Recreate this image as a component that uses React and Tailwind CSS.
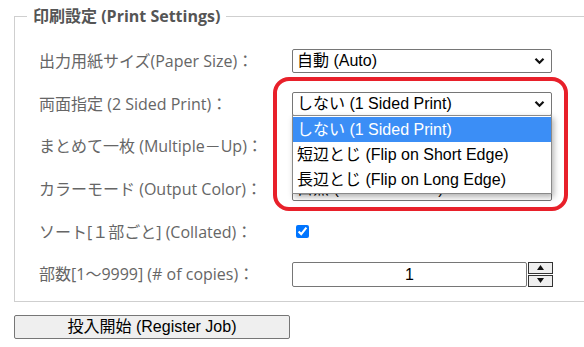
import React from 'react';

const labelFont = { fontFamily: '"Open Sans", "Noto Sans CJK JP", sans-serif' };
const ctrlFont = { fontFamily: '"Liberation Sans", "Noto Sans CJK JP", sans-serif' };

const Chevron = () => (
  <svg className="absolute right-[6px] top-1/2 -translate-y-1/2" width="11" height="8" viewBox="0 0 11 8">
    <path d="M1.5 1.8 L5.5 5.8 L9.5 1.8" fill="none" stroke="#111" strokeWidth="2.2" />
  </svg>
);

const FakeSelect = ({ value }) => (
  <div
    className="relative h-[24px] w-[260px] rounded-[2px] border border-[#767676] bg-white pl-[4px] text-[16px] leading-[22px] text-black"
    style={ctrlFont}
  >
    {value}
    <Chevron />
  </div>
);

const Row = ({ label, children }) => (
  <div className="flex h-[42.6px] items-center">
    <div className="w-[253px] text-[16px] text-[#666]" style={labelFont}>{label}</div>
    <div className="relative">{children}</div>
  </div>
);

const options = [
  'しない (1 Sided Print)',
  '短辺とじ (Flip on Short Edge)',
  '長辺とじ (Flip on Long Edge)',
];

const App = () => {
  return (
    <div className="relative h-[347px] w-[584px] overflow-hidden bg-white">
      <div className="pt-[4px]">
        <fieldset className="ml-[14px] w-[640px] border border-[#cfcfcf] pb-[5px]">
          <legend
            className="ml-[12px] px-[6px] text-[16px] font-bold leading-[24px] text-[#555]"
            style={labelFont}
          >
            印刷設定 (Print Settings)
          </legend>
          <div className="pl-[24px] pt-[12px]">
            <Row label="出力用紙サイズ(Paper Size)：">
              <FakeSelect value="自動 (Auto)" />
            </Row>
            <Row label="両面指定 (2 Sided Print)：">
              <FakeSelect value="しない (1 Sided Print)" />
              <div
                className="absolute left-0 top-[23px] z-10 w-[260px] border border-[#8a8a8a] bg-white py-[1px] text-[16px] shadow-[2px_3px_6px_rgba(0,0,0,0.3)]"
                style={ctrlFont}
              >
                {options.map((o, i) => (
                  <div
                    key={o}
                    className={
                      'h-[25px] pl-[4px] leading-[25px] ' +
                      (i === 0 ? 'bg-[#3b8ef6] text-white' : 'text-black')
                    }
                  >
                    {o}
                  </div>
                ))}
              </div>
            </Row>
            <Row label="まとめて一枚 (Multiple－Up)：">
              <FakeSelect value="" />
            </Row>
            <Row label="カラーモード (Output Color)：">
              <FakeSelect value="白黒 (Black & White)" />
            </Row>
            <Row label="ソート[１部ごと] (Collated)：">
              <input type="checkbox" checked readOnly className="ml-[4px] block h-[13px] w-[13px] accent-[#0075ff]" />
            </Row>
            <Row label="部数[1～9999] (# of copies)：">
              <div className="flex items-center gap-[1px]">
                <div
                  className="h-[25px] w-[235px] rounded-[2px] border border-[#767676] text-center text-[16px] leading-[23px] text-black"
                  style={ctrlFont}
                >
                  1
                </div>
                <div className="flex flex-col gap-[1px]">
                  <div className="flex h-[12px] w-[25px] items-center justify-center border border-[#333] bg-[#efefef]">
                    <svg width="7" height="5" viewBox="0 0 7 5"><path d="M3.5 0 L7 5 L0 5 Z" fill="#111" /></svg>
                  </div>
                  <div className="flex h-[12px] w-[25px] items-center justify-center border border-[#333] bg-[#efefef]">
                    <svg width="7" height="5" viewBox="0 0 7 5"><path d="M0 0 L7 0 L3.5 5 Z" fill="#111" /></svg>
                  </div>
                </div>
              </div>
            </Row>
          </div>
        </fieldset>
      </div>
      <button
        className="ml-[14px] mt-[13px] h-[24px] w-[276px] rounded-[2px] border border-[#767676] bg-[#efefef] text-[16px] leading-[22px] text-black"
        style={ctrlFont}
      >
        投入開始 (Register Job)
      </button>
      <div className="pointer-events-none absolute left-[273px] top-[77px] z-20 h-[134px] w-[295px] rounded-[16px] border-[4px] border-[#e8202a]" />
    </div>
  );
};

export default App;
